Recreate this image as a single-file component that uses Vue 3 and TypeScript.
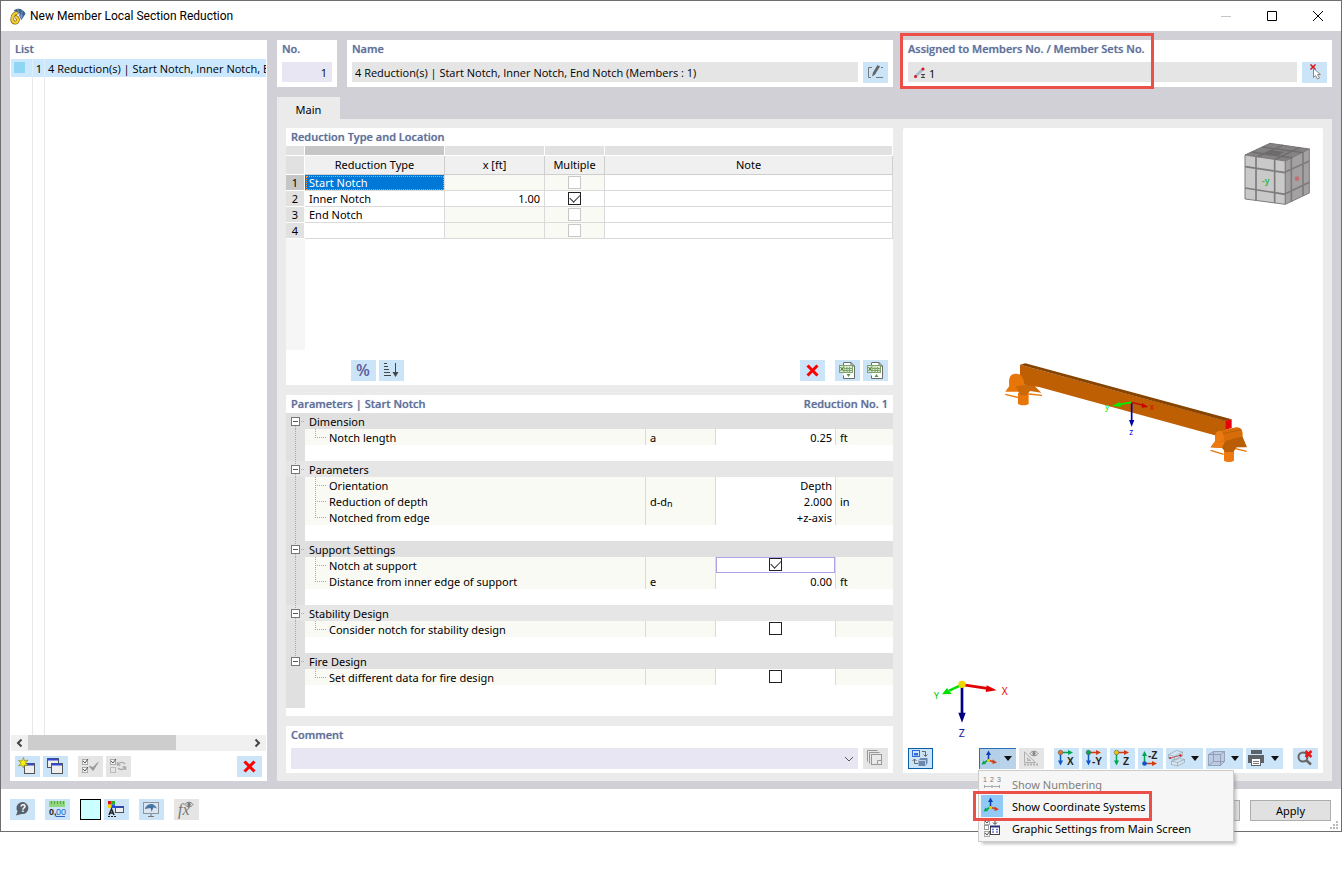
<script setup lang="ts">
import { reactive, ref } from 'vue'

interface Reduction {
  type: string
  x: string
  multiple: boolean
  locked: boolean
}

interface Param {
  label: string
  symbol?: string
  sub?: string
  value?: string
  unit?: string
  check?: boolean
  active?: boolean
}

interface Group {
  title: string
  rows: Param[]
}

interface Tool {
  icon: string
  label: string
  state?: string
  menu?: boolean
  gap?: boolean
}

const entryName = '4 Reduction(s) | Start Notch, Inner Notch, End Notch (Members : 1)'
const memberNo = ref('1')
const assigned = ref('1')
const name = ref(entryName)

const reductions = reactive<Reduction[]>([
  { type: 'Start Notch', x: '', multiple: false, locked: true },
  { type: 'Inner Notch', x: '1.00', multiple: true, locked: false },
  { type: 'End Notch', x: '', multiple: false, locked: true },
  { type: '', x: '', multiple: false, locked: true },
])

const groups = reactive<Group[]>([
  { title: 'Dimension', rows: [{ label: 'Notch length', symbol: 'a', value: '0.25', unit: 'ft' }] },
  {
    title: 'Parameters',
    rows: [
      { label: 'Orientation', value: 'Depth' },
      { label: 'Reduction of depth', symbol: 'd-d', sub: 'n', value: '2.000', unit: 'in' },
      { label: 'Notched from edge', value: '+z-axis' },
    ],
  },
  {
    title: 'Support Settings',
    rows: [
      { label: 'Notch at support', check: true, active: true },
      { label: 'Distance from inner edge of support', symbol: 'e', value: '0.00', unit: 'ft' },
    ],
  },
  { title: 'Stability Design', rows: [{ label: 'Consider notch for stability design', check: false }] },
  { title: 'Fire Design', rows: [{ label: 'Set different data for fire design', check: false }] },
])

const viewTools: Tool[] = [
  { icon: 'ruler', label: 'Dimensions', state: 'off' },
  { icon: 'viewX', label: 'View in X', gap: true },
  { icon: 'viewY', label: 'View in -Y' },
  { icon: 'viewZ', label: 'View in Z' },
  { icon: 'viewNegZ', label: 'View in -Z' },
  { icon: 'section', label: 'Section display', menu: true },
  { icon: 'cube', label: 'Box display', menu: true },
  { icon: 'printer', label: 'Print', menu: true },
  { icon: 'resetZoom', label: 'Reset view', gap: true },
]

const menuItems = [
  { icon: 'numbering', label: 'Show Numbering', state: 'disabled' },
  { icon: 'axes', label: 'Show Coordinate Systems', state: 'checked' },
  { icon: 'settings', label: 'Graphic Settings from Main Screen', state: '' },
]

const xMark = '<path d="M7.500 5.500l10 10M17.500 5.500l-10 10" stroke="#f00" stroke-width="3"/>'
const excel =
  '<path d="M9 2.500h7l3.500 3.500v12.500h-11v-3M8.500 6V2.500M16 2.500V6h3.500" fill="#fff" stroke="#6a6a6a"/><rect x="4.500" y="5.500" width="13" height="7" fill="#dcebd0" stroke="#7fa469"/><path d="M9 6v6M12 7v5M14.500 7v5M9 8.500h8M9 10.500h8" stroke="#7fa469"/><path d="M5.500 7l3 4M8.500 7l-3 4" stroke="#4e7d38"/>'
const darkTick = (x: number, y: number) =>
  `<rect x="${x}.5" y="${y}.5" width="5" height="5" fill="#f4f4f4" stroke="#aaa"/><path d="M${x + 1} ${y + 2}l2 2 3-4" fill="none" stroke="#555"/>`
const arrow = (c: string, d: string, head: string) =>
  `<path d="${d}" stroke="${c}" stroke-width="1.500"/><path d="${head}" fill="${c}"/>`
const text = (x: number, y: number, size: number, fill: string, t: string, extra = '') =>
  `<text x="${x}" y="${y}" font-size="${size}" fill="${fill}" font-family="Liberation Sans, sans-serif" ${extra}>${t}</text>`

const axes =
  arrow('#0b3fb0', 'M9.500 12V6', 'M7 7h5L9.500 2.500z') +
  arrow('#00a550', 'M9.500 12L5.500 14.500', 'M2.500 16.500l2-4 2.500 3.500z') +
  arrow('#d43c10', 'M9.500 12.500L14 13.500', 'M18 14.500l-4.500-3v4.500z') +
  '<circle cx="9.500" cy="12.500" r="1.500" fill="#f2d400"/>'

const viewDown = (h: string, v: string, dot: string, label: string) =>
  arrow(h, 'M6 4.500h9', 'M14 2l5 2.500-5 2.500z') +
  arrow(v, 'M6.500 5v8', 'M4 12.500h5l-2.500 5z') +
  `<circle cx="6.500" cy="4.500" r="2.300" fill="${dot}" stroke="#555" stroke-width=".5"/>` +
  text(label.length > 1 ? 10 : 13, 17, 10, '#222', label, 'font-weight="bold"')

const icons: Record<string, string> = {
  add:
    '<rect x="9.500" y="7.500" width="10" height="10" fill="#eee" stroke="#555"/><path d="M10 8.500h9" stroke="#3148d8" stroke-width="2"/><path d="M8.500 1.500l1 3.500 3.500-1-2.500 3 2.500 2.500-3.500-.500-1 3-1.500-3-3.500 1 2.500-3-2.500-2.500 3.500.500z" fill="#f8f000" stroke="#908a20" stroke-width=".7"/>',
  copy:
    '<rect x="4.500" y="2.500" width="11" height="9" fill="#eee" stroke="#555"/><path d="M5 3.500h10" stroke="#3148d8" stroke-width="2"/><rect x="8.500" y="7.500" width="11" height="10" fill="#eee" stroke="#555"/><path d="M9 8.500h10" stroke="#3148d8" stroke-width="2"/>',
  checkAll: darkTick(4, 3) + darkTick(4, 11) + '<path d="M11.500 10.500l3.500 4 5-8-5 5z" fill="#999" stroke="#999"/>',
  checkSwap:
    darkTick(4, 3) +
    '<rect x="4.500" y="11.500" width="5" height="5" fill="none" stroke="#bbb"/><path d="M19 8c-2-2-5-2-7 0M11.500 6v3h3M12 12c2 2 5 2 7 0M19.500 14v-3h-3" fill="none" stroke="#aaa" stroke-width="1.500"/>',
  remove: xMark,
  percent: '<text x="5" y="16" font-size="16" font-weight="600" fill="#5c5c9c" font-family="Open Sans, sans-serif">%</text>',
  sort:
    '<path d="M5 3.500h3M5 6.500h4M5 9.500h5M5 12.500h6M5 15.500h7M16.500 3v11" stroke="#444"/><path d="M13.500 12h6l-3 5z" fill="#444"/>',
  excelIn: excel + '<path d="M11.500 14h4l-2 3z" fill="#5f9448"/>',
  excelOut: excel + '<path d="M11.500 17h4l-2-3z" fill="#5f9448"/>',
  layers:
    '<path d="M4.500 13.500v-11h10M6.500 15.500v-11h10" fill="none" stroke="#999"/><rect x="8.500" y="6.500" width="10" height="10" fill="#eaeaea" stroke="#999"/><path d="M14.500 16v-3.500h4" fill="none" stroke="#999"/>',
  edit:
    '<path d="M9 5.500H5.500v10H8M13 15.500h7M18 5.500h2" fill="none" stroke="#777"/><path d="M9 14.500l1-4L14.500 3l2.500 1.500L12 12.500z" fill="#666"/>',
  pick:
    '<path d="M8.500 2.500l5 5M13.500 2.500l-5 5" stroke="#e01010" stroke-width="1.500"/><path d="M11.500 6.500v9l2-2 2 3.500 2-1-2-3.500h3z" fill="#fff" stroke="#888"/>',
  help:
    '<path d="M6 16.500l1.500-4a6 6 0 1 1 4 2.500z" fill="#5a6068"/>' + text(10, 13, 10, '#fff', '?', 'font-weight="bold"'),
  units:
    '<rect x="4" y="2" width="16" height="6" fill="#8fd67c"/><path d="M6.500 2v3M9.500 2v3M12.500 2v3M15.500 2v3M18.500 2v3" stroke="#5aa24a"/>' +
    text(4, 16, 9, '#222', '0,', 'font-weight="bold"') +
    text(11, 16, 9, '#2b62c8', '00') +
    '<path d="M11 17.500h9" stroke="#2b62c8"/>',
  display:
    '<path d="M4 2h3.500v3.500H4z" fill="#e01010"/><path d="M7.500 2H11v3.500H7.500z" fill="#28b020"/><path d="M4 5.500h3.500V9H4z" fill="#f2d400"/><path d="M7.500 5.500H11V9H7.500z" fill="#2050e0"/><path d="M5 16l2.500-6 2.500 6M6 14h3" fill="none" stroke="#222" stroke-width="1.500"/><path d="M4 17.500h9" stroke="#222" stroke-dasharray="2 1"/><rect x="11.500" y="7.500" width="8" height="6" fill="#f0f0f0" stroke="#555"/><path d="M11 8h9" stroke="#3148a8" stroke-width="2"/>',
  monitor:
    '<rect x="4.500" y="3.500" width="15" height="11" fill="#dce6f0" stroke="#8a949c"/><path d="M9 17.500h6M12 15v2" stroke="#777"/><path d="M6 9.500C8 4 15 3 18 9.500l-3.500-1-2 4.500-1-4.500z" fill="#4f7fae"/><path d="M6 9.500l6-1M9 6l4 4M13 5v5" stroke="#2f5a86" stroke-width=".7"/>',
  formula:
    '<text x="4" y="16" font-size="16" font-style="italic" fill="#777" font-family="Liberation Serif, serif">fx</text><path d="M11 5.500c2-3 6-3 8 0-2 3-6 3-8 0z" fill="#e5e5e5" stroke="#777"/><circle cx="15" cy="5.500" r="1.700" fill="#777"/>',
  swapView:
    '<rect x="4.500" y="2.500" width="7" height="6" fill="none" stroke="#2f6ae0"/><path d="M6 5h4v2.500H6z" fill="#2f6ae0"/><path d="M14 3.500h3.500V8M15.500 6.500l2 2 2-2M10 15.500H6.500V11M4.500 13l2-2 2 2" fill="none" stroke="#666"/><path d="M10.500 12.500l2-2.500h7v5l-2 3h-7z" fill="#6b87ad"/><path d="M11 12.500h6.500v5" fill="none" stroke="#c0d0e4"/>',
  axes,
  ruler:
    '<path d="M5.500 4v10.500h11z" fill="none" stroke="#b0b0b0"/><path d="M8.500 10v2.500h3z" fill="none" stroke="#b0b0b0"/><path d="M5 16.500h14" stroke="#b0b0b0" stroke-width="2" stroke-dasharray="2 1"/><path d="M11 5.500c2-3 6-3 8 0-2 3-6 3-8 0z" fill="#eee" stroke="#888"/><circle cx="15" cy="5.500" r="1.700" fill="#888"/>',
  viewX: viewDown('#00a550', '#0d56c8', '#e8702a', 'X'),
  viewY: viewDown('#d43c10', '#0d56c8', '#00a550', '-Y'),
  viewZ: viewDown('#d43c10', '#00a550', '#f2c400', 'Z'),
  viewNegZ:
    arrow('#00a550', 'M6.500 15V7', 'M4 8h5L6.500 3z') +
    arrow('#d43c10', 'M7 15.500h7', 'M14 13l5 2.500-5 2.500z') +
    '<circle cx="6.500" cy="15.500" r="2.300" fill="#0d56c8"/>' +
    text(10, 11, 10, '#222', '-Z', 'font-weight="bold"'),
  section:
    '<path d="M2.500 6.500l8-4 6 1.500v4l-8 3.500-6-1.500zM2.500 6.500l6 2 8-4.500M8.500 8.500v3M5.500 13l8-2.500 5 1v3l-7 3.500-6-1.500zM5.500 13l6 1.500 7-3M11.500 14.500V18" fill="#d5e4f0" stroke="#8f9aa3" stroke-width=".6"/><path d="M4 10l10-2.500" stroke="#b04048" stroke-width=".8"/><circle cx="14.500" cy="7.500" r="1.200" fill="#d02020"/><circle cx="4" cy="10" r="1" fill="#d02020"/>',
  cube:
    '<path d="M2.500 6.500l5-3h11v10l-4 4h-12z" fill="#bccbe4" stroke="#858ba0" stroke-width=".7"/><path d="M2.500 6.500h12v11M14.500 6.500l4-3M7.500 3.500v10h11M7.500 13.500l-5 4" fill="none" stroke="#858ba0" stroke-width=".7"/>',
  printer:
    '<path d="M5 2h11v4H5zM2 7h16v8H2z" fill="#5c6268"/><rect x="5.500" y="10.500" width="9" height="7" fill="#fff" stroke="#5c6268"/><path d="M7 13.500h6M7 15.500h6" stroke="#777"/>',
  resetZoom:
    '<circle cx="10" cy="9" r="4.500" fill="none" stroke="#666" stroke-width="2"/><path d="M13 12l5 4.500" stroke="#666" stroke-width="2.500"/><path d="M12.500 3l6 6M18.500 3l-6 6" stroke="#e81818" stroke-width="2.500"/>',
  numbering:
    '<path d="M3 13.500h16M3.500 12v3M11 12v3M18.500 12v3" stroke="#aaa"/>' +
    text(2, 9, 7, '#777', '1') + text(9, 9, 7, '#777', '2') + text(16, 9, 7, '#777', '3'),
  settings:
    darkTick(3, 2) +
    '<rect x="3.500" y="8.500" width="4" height="4" fill="#fff" stroke="#999"/>' +
    darkTick(3, 14) +
    '<path d="M11 3.500h3V7M12 5.500l2 2 2-2" fill="none" stroke="#444"/><rect x="9.500" y="9.500" width="9" height="8" fill="#fff" stroke="#444"/><path d="M9 9.500h10" stroke="#24307c" stroke-width="2"/><path d="M11 12.500h2M11 15h2M15 12.500h2M15 15h2" stroke="#6a7ad0" stroke-width="1.500"/>',
}
</script>

<template>
  <div class="desktop">
    <main class="window">
      <header class="titlebar">
        <svg class="app-icon" viewBox="0 0 18 18" aria-hidden="true">
          <path d="M5 3C9-1 15 1 17.500 6L13 13l-3-7z" fill="#3d618c" />
          <path d="M6 3l9 6M9 1l4 11M14 2l-1 9" stroke="#8fb0d4" stroke-width=".7" />
          <path d="M9 5.500C5 5 3.500 9 3.500 12a3 3 0 1 0 3-2.500" fill="none" stroke="#7a6012" stroke-width="4" />
          <path d="M9 5.500C5 5 3.500 9 3.500 12a3 3 0 1 0 3-2.500" fill="none" stroke="#f6cf30" stroke-width="2.500" />
        </svg>
        <h1>New Member Local Section Reduction</h1>
        <div class="window-controls">
          <button type="button" aria-label="Minimize"><svg viewBox="0 0 12 12"><path d="M1 6.500h10" stroke="#c4c4c4" /></svg></button>
          <button type="button" aria-label="Maximize"><svg viewBox="0 0 12 12"><path d="M1.500 1.500h9v9h-9z" fill="none" stroke="#000" /></svg></button>
          <button type="button" aria-label="Close"><svg viewBox="0 0 12 12"><path d="M1 1l10 10M11 1L1 11" stroke="#000" /></svg></button>
        </div>
      </header>

      <div class="body">
        <section class="card list">
          <h2>List</h2>
          <ul class="entries">
            <li class="entry">
              <span class="swatch-cell"><i></i></span>
              <span class="no-cell">1</span>
              <span class="name-cell">{{ entryName }}</span>
            </li>
          </ul>
          <div class="scrollbar">
            <button type="button" aria-label="Scroll left"><svg viewBox="0 0 17 16"><path d="M10.500 4.500L7 8l3.500 3.500" fill="none" stroke="#444" stroke-width="2" /></svg></button>
            <div class="track"><div class="thumb"></div></div>
            <button type="button" aria-label="Scroll right"><svg viewBox="0 0 17 16"><path d="M6.500 4.500L10 8l-3.500 3.500" fill="none" stroke="#444" stroke-width="2" /></svg></button>
          </div>
          <div class="bar list-bar">
            <button type="button" class="tool" aria-label="New"><svg viewBox="0 0 25 21" v-html="icons.add"></svg></button>
            <button type="button" class="tool" aria-label="Copy"><svg viewBox="0 0 25 21" v-html="icons.copy"></svg></button>
            <button type="button" class="tool off gap" aria-label="Select all"><svg viewBox="0 0 25 21" v-html="icons.checkAll"></svg></button>
            <button type="button" class="tool off" aria-label="Invert selection"><svg viewBox="0 0 25 21" v-html="icons.checkSwap"></svg></button>
            <button type="button" class="tool push" aria-label="Delete"><svg viewBox="0 0 25 21" v-html="icons.remove"></svg></button>
          </div>
        </section>

        <div class="editor">
          <div class="identity">
            <section class="card">
              <h2><label for="no">No.</label></h2>
              <div class="field-row"><input id="no" v-model="memberNo" class="field lilac right" /></div>
            </section>
            <section class="card">
              <h2><label for="name">Name</label></h2>
              <div class="field-row">
                <input id="name" v-model="name" class="field" readonly />
                <button type="button" class="tool" aria-label="Edit name"><svg viewBox="0 0 25 21" v-html="icons.edit"></svg></button>
              </div>
            </section>
            <section class="card marked">
              <h2><label for="assigned">Assigned to Members No. / Member Sets No.</label></h2>
              <div class="field-row">
                <div class="field icon-field">
                  <svg class="member-icon" viewBox="0 0 14 14" aria-hidden="true">
                    <path d="M2.500 10.500l8-8" stroke="#a9bad2" stroke-width="3" />
                    <circle cx="2.500" cy="10.500" r="1.500" fill="#d81818" />
                    <circle cx="10" cy="3" r="1.500" fill="#d81818" />
                    <path d="M8 8.500h4M8 11.500h4M10 8.500v3" stroke="#444" />
                  </svg>
                  <input id="assigned" v-model="assigned" />
                </div>
                <button type="button" class="tool" aria-label="Pick members"><svg viewBox="0 0 25 21" v-html="icons.pick"></svg></button>
              </div>
              <div class="mark mark-assigned"></div>
            </section>
          </div>

          <nav class="tabs"><button type="button" class="tab">Main</button></nav>

          <div class="page">
            <div class="column">
              <section class="card reductions">
                <h2 class="tight">Reduction Type and Location</h2>
                <table class="grid">
                  <colgroup>
                    <col class="c-no" /><col class="c-type" /><col class="c-x" /><col class="c-multi" /><col />
                  </colgroup>
                  <thead>
                    <tr class="strip"><td></td><td class="current"></td><td></td><td></td><td></td></tr>
                    <tr class="heads">
                      <th></th><th>Reduction Type</th><th>x [ft]</th><th>Multiple</th><th>Note</th>
                    </tr>
                  </thead>
                  <tbody>
                    <tr v-for="(r, i) in reductions" :key="i">
                      <th scope="row" :class="{ current: i === 0 }">{{ i + 1 }}</th>
                      <td :class="{ selected: i === 0 }">{{ r.type }}</td>
                      <td class="num" :class="{ locked: r.locked }">{{ r.x }}</td>
                      <td class="multi" :class="{ locked: r.locked }">
                        <input v-model="r.multiple" type="checkbox" class="check" :disabled="r.locked" :aria-label="`Multiple, row ${i + 1}`" />
                      </td>
                      <td></td>
                    </tr>
                  </tbody>
                </table>
                <div class="grid-rest"></div>
                <div class="bar grid-bar">
                  <button type="button" class="tool" aria-label="Relative"><svg viewBox="0 0 25 21" v-html="icons.percent"></svg></button>
                  <button type="button" class="tool" aria-label="Sort"><svg viewBox="0 0 25 21" v-html="icons.sort"></svg></button>
                  <button type="button" class="tool push" aria-label="Delete row"><svg viewBox="0 0 25 21" v-html="icons.remove"></svg></button>
                  <button type="button" class="tool gap" aria-label="Import table"><svg viewBox="0 0 25 21" v-html="icons.excelIn"></svg></button>
                  <button type="button" class="tool" aria-label="Export table"><svg viewBox="0 0 25 21" v-html="icons.excelOut"></svg></button>
                </div>
              </section>

              <section class="card params">
                <h2 class="tight split"><span>Parameters | Start Notch</span><span>Reduction No. 1</span></h2>
                <table class="tree">
                  <colgroup>
                    <col class="t-gutter" /><col /><col class="t-symbol" /><col class="t-value" /><col class="t-unit" />
                  </colgroup>
                  <tbody v-for="(g, gi) in groups" :key="g.title">
                    <tr class="group" :class="{ light: gi % 2 }">
                      <td class="side">
                        <svg class="gutter" viewBox="0 0 19 16" aria-hidden="true">
                          <path v-if="gi" class="dots" d="M9.500 0V4" />
                          <path v-if="gi < groups.length - 1" class="dots" d="M9.500 13V16" />
                          <path class="dots" d="M15 8.500h4" />
                          <rect x="5.500" y="4.500" width="8" height="8" fill="#fff" stroke="#777" />
                          <path d="M7 8.500h5" stroke="#555" />
                        </svg>
                      </td>
                      <th colspan="4" scope="rowgroup"><span class="label">{{ g.title }}</span></th>
                    </tr>
                    <tr v-for="(p, pi) in g.rows" :key="p.label" class="param">
                      <td class="side">
                        <svg class="gutter" viewBox="0 0 19 16" aria-hidden="true"><path v-if="gi < groups.length - 1" class="dots" d="M9.500 0V16" /></svg>
                      </td>
                      <th scope="row">
                        <svg class="branch" viewBox="0 0 24 16" aria-hidden="true">
                          <path class="dots" :d="pi < g.rows.length - 1 ? 'M10.500 0V16M10 8.500H21' : 'M10.500 0V8.500M10 8.500H21'" />
                        </svg><span class="label">{{ p.label }}</span>
                      </th>
                      <td><span class="label">{{ p.symbol }}<sub v-if="p.sub">{{ p.sub }}</sub></span></td>
                      <td class="value" :class="{ active: p.active }">
                        <input v-if="p.value !== undefined" v-model="p.value" :aria-label="p.label" />
                        <input v-else v-model="p.check" type="checkbox" class="check" :aria-label="p.label" />
                      </td>
                      <td class="unit"><span class="label">{{ p.unit }}</span></td>
                    </tr>
                    <tr class="space" :class="{ last: gi === groups.length - 1 }">
                      <td class="side">
                        <svg class="gutter" viewBox="0 0 19 16" aria-hidden="true"><path v-if="gi < groups.length - 1" class="dots" d="M9.500 0V16" /></svg>
                      </td>
                      <td colspan="4"></td>
                    </tr>
                  </tbody>
                </table>
              </section>

              <section class="card">
                <h2><label for="comment">Comment</label></h2>
                <div class="field-row">
                  <div class="combo">
                    <select id="comment"><option></option></select>
                    <svg viewBox="0 0 10 6" aria-hidden="true"><path d="M1 1l4 4 4-4" fill="none" stroke="#555" /></svg>
                  </div>
                  <button type="button" class="tool off" aria-label="Comment templates"><svg viewBox="0 0 25 21" v-html="icons.layers"></svg></button>
                </div>
              </section>
            </div>

            <section class="viewport">
              <svg class="scene" viewBox="0 0 420 616" role="img" aria-label="Member model">
                <g transform="translate(327 2) scale(.333333)">
                  <path d="M45 75L120 40l118 17-72 36z" fill="#848282" stroke="#767474" stroke-width="3" />
                  <path d="M45 75l121 18v130L45 207z" fill="#c9c9c9" stroke="#7e7b7b" stroke-width="3" />
                  <path d="M166 93l72-36v132l-72 34z" fill="#a3a1a1" stroke="#7e7b7b" stroke-width="3" />
                  <path d="M78 79v133M134 87v132M45 110l121 18M45 174l121 19M184 84v131M219 66v131M166 126l72-33M166 191l72-34" stroke="#7e7b7b" stroke-width="5" />
                  <path d="M66 66l121 18M97 51l121 17M83 80l76-35M136 88l73-36" stroke="#6e6c6c" stroke-width="4" />
                  <path d="M104 72l22-11 37 5-22 12z" fill="#6d6b6b" />
                  <circle cx="201" cy="146" r="7" fill="#c07070" />
                  <text x="96" y="161" font-size="25" font-weight="bold" fill="#3fb84a">-y</text>
                </g>
                <g transform="translate(87 212) scale(.333333)">
                  <path d="M46 163l40 10M116 162l40 4" stroke="#e87508" stroke-width="4" />
                  <path d="M62 132L46 155h44l20-20z" fill="#e87508" />
                  <path d="M84 158h32v34c-8 5-24 5-32 0z" fill="#e87508" />
                  <path d="M78 138l50-6 26 26-34-5-10 13H92l-8-14z" fill="#cc6906" />
                  <path d="M90 74l618 168v43l-28 2L150 142l-60-10z" fill="#bd5f02" />
                  <path d="M90 74l16-4 619 168-17 5z" fill="#864400" />
                  <path d="M707 242l18-4v26l-18 5z" fill="#e8000c" />
                  <path d="M58 138c-3-24 2-36 18-37 14-1 25 6 27 33l-20 4z" fill="#e87508" />
                  <path d="M662 331l39 12M736 326l34 8" stroke="#e87508" stroke-width="4" />
                  <path d="M702 325h30v37c-8 5-22 5-30 0z" fill="#ec7a10" />
                  <path d="M678 300L662 322l34 2 10 12h24l10-14 31 0-14-34z" fill="#b95e04" />
                  <path d="M678 300L662 322l34 2 10-22z" fill="#ec7a10" />
                  <path d="M676 303c-3-20 3-29 15-31l48-10c16-1 20 12 19 26l-58 17z" fill="#d86c08" />
                  <path d="M676 304c-4-20 3-32 13-31 16 2 14 30 10 31z" fill="#ec7a10" />
                  <path d="M698 281l56-12" stroke="#b96008" stroke-width="3" />
                  <path d="M425 187v58" stroke="#0000a8" stroke-width="5" /><path d="M417 240h16l-8 20z" fill="#0000a8" />
                  <path d="M425 187l-42 7" stroke="#00f000" stroke-width="5" /><path d="M366 198l23-12 4 14z" fill="#00f000" />
                  <path d="M425 187l36 9" stroke="#c80000" stroke-width="4" /><path d="M475 201l-18-12-2 14z" fill="#c80000" />
                  <text x="345" y="211" font-size="25" fill="#00e800">y</text>
                  <text x="479" y="210" font-size="25" fill="#e80000">x</text>
                  <text x="418" y="286" font-size="25" fill="#0000e8">z</text>
                </g>
                <g transform="translate(17 532) scale(.333333)">
                  <path d="M126 74v90" stroke="#000080" stroke-width="8" /><path d="M115 158h22l-11 30z" fill="#000080" />
                  <path d="M126 74L88 92" stroke="#00e000" stroke-width="8" /><path d="M66 103l15-19 14 18z" fill="#00e000" />
                  <path d="M126 74l80 12" stroke="#e00000" stroke-width="8" /><path d="M230 91l-30-15-3 20z" fill="#e00000" />
                  <circle cx="126" cy="73" r="11" fill="#ecd800" />
                  <text x="41" y="117" font-size="29" fill="#00c800">Y</text>
                  <text x="245" y="105" font-size="30" fill="#e80000">X</text>
                  <text x="116" y="230" font-size="32" fill="#2020a0">Z</text>
                </g>
              </svg>
              <div class="bar view-bar">
                <button type="button" class="tool on" aria-label="Switch view"><svg viewBox="0 0 25 21" v-html="icons.swapView"></svg></button>
                <div class="menu-anchor push">
                  <button type="button" class="tool wide pressed" aria-label="Display options" aria-expanded="true">
                    <svg viewBox="0 0 25 21" v-html="icons.axes"></svg><i class="caret"></i>
                  </button>
                  <div class="menu" role="menu">
                    <button v-for="m in menuItems" :key="m.label" type="button" role="menuitem" :class="m.state">
                      <svg viewBox="0 0 22 22" v-html="icons[m.icon]"></svg><span>{{ m.label }}</span>
                    </button>
                    <div class="mark mark-menu"></div>
                  </div>
                </div>
                <button v-for="t in viewTools" :key="t.icon" type="button" class="tool" :class="[t.state, { wide: t.menu, gap: t.gap }]" :aria-label="t.label">
                  <svg viewBox="0 0 25 21" v-html="icons[t.icon]"></svg><i v-if="t.menu" class="caret"></i>
                </button>
              </div>
            </section>
          </div>
        </div>
      </div>

      <footer class="footer">
        <button type="button" class="tool" aria-label="Help"><svg viewBox="0 0 25 21" v-html="icons.help"></svg></button>
        <button type="button" class="tool gap" aria-label="Units"><svg viewBox="0 0 25 21" v-html="icons.units"></svg></button>
        <button type="button" class="colour gap" aria-label="Colour"></button>
        <button type="button" class="tool" aria-label="Display properties"><svg viewBox="0 0 25 21" v-html="icons.display"></svg></button>
        <button type="button" class="tool gap" aria-label="Screen"><svg viewBox="0 0 25 21" v-html="icons.monitor"></svg></button>
        <button type="button" class="tool off gap" aria-label="Formula"><svg viewBox="0 0 25 21" v-html="icons.formula"></svg></button>
        <button type="button" class="action push" aria-label="Cancel"></button>
        <button type="button" class="action">Apply</button>
        <svg class="grip" viewBox="0 0 8 8" aria-hidden="true"><path d="M6 0h2v2H6zM3 3h2v2H3zM6 3h2v2H6zM0 6h2v2H0zM3 6h2v2H3zM6 6h2v2H6z" fill="#bbb" /></svg>
      </footer>
    </main>
  </div>
</template>

<style>
body {
  background: #fff;
}
</style>

<style scoped>
* {
  box-sizing: border-box;
}
button,
input,
select {
  font: inherit;
  color: inherit;
  margin: 0;
  padding: 0;
  border: 0;
  background: none;
  border-radius: 0;
  min-width: 0;
}
svg {
  display: block;
}
.desktop {
  min-height: 100vh;
}
.window {
  border: 1px solid #6f6d70;
  font: 11px/16px "Noto Sans", "Open Sans", sans-serif;
  color: #000;
}
.titlebar {
  display: flex;
  align-items: center;
  height: 30px;
  padding-left: 8px;
}
.titlebar h1 {
  margin: 0 auto 0 4px;
  font: 400 12px/16px Roboto, "Open Sans", sans-serif;
}
.app-icon {
  width: 17px;
  height: 17px;
}
.window-controls {
  display: flex;
}
.window-controls button {
  width: 46px;
  height: 28px;
  display: grid;
  place-items: center;
}
.window-controls svg {
  width: 12px;
  height: 12px;
}
.body {
  display: grid;
  grid-template-columns: 257px 1fr;
  gap: 10px;
  padding: 9px 9px 8px;
  background: #d1d0d6;
}
.card {
  background: #fff;
  min-width: 0;
}
.card h2 {
  margin: 0;
  padding: 1px 5px 0;
  height: 19px;
  font: 600 11px/16px "Open Sans", sans-serif;
  color: #5f6f99;
  text-shadow: 0 0 1px #5f6f9999;
}
.card h2.tight {
  height: 18px;
}
.split {
  display: flex;
  justify-content: space-between;
}
.list {
  display: flex;
  flex-direction: column;
  padding: 0 1px;
}
.card.list h2 {
  padding-left: 4px;
}
.entries {
  flex: 1;
  margin: 0;
  padding: 0;
  list-style: none;
  background: linear-gradient(#e8e8e8, #e8e8e8) 21px 0 / 1px 100% no-repeat,
    linear-gradient(#e8e8e8, #e8e8e8) 33px 0 / 1px 100% no-repeat;
}
.entry {
  display: grid;
  grid-template-columns: 22px 12px 1fr;
  height: 18px;
  line-height: 20px;
  background: #cce8ff;
}
.entry span {
  border-right: 1px solid #dfeefb;
}
.entry .name-cell {
  padding-left: 3px;
  border: 0;
  overflow: hidden;
  white-space: nowrap;
  font-family: "Open Sans", sans-serif;
}
.swatch-cell {
  padding: 3px;
}
.swatch-cell i {
  display: block;
  width: 11px;
  height: 11px;
  background: #8fd6f4;
}
.no-cell {
  text-align: right;
  padding-right: 2px;
}
.scrollbar {
  display: flex;
  height: 16px;
  background: #f0f0f0;
}
.scrollbar button {
  width: 17px;
}
.track {
  flex: 1;
}
.thumb {
  width: 67%;
  height: 15px;
  background: #cdcdcd;
}
.bar {
  display: flex;
  gap: 3px;
}
.list-bar {
  padding: 5px 4px 4px;
}
.tool {
  flex: none;
  display: flex;
  align-items: center;
  width: 25px;
  height: 21px;
  background: #cce4f7;
}
.tool svg {
  width: 25px;
  height: 21px;
  flex: none;
}
.tool.off {
  background: #e5e5e5;
}
.tool.wide {
  width: 37px;
}
.tool.on {
  box-shadow: inset 0 0 0 1px #0a5ea8;
}
.tool.pressed {
  background: linear-gradient(90deg, #b4cfe8 21px, #b9d3eb 21px);
  box-shadow: inset 1px 1px #2a70b4;
}
.caret {
  border: 4px solid transparent;
  border-top: 5px solid #111;
  border-bottom: 0;
}
.gap {
  margin-left: 7px;
}
.push {
  margin-left: auto;
}
.editor {
  min-width: 0;
  display: flex;
  flex-direction: column;
}
.identity {
  display: grid;
  grid-template-columns: 60px 1fr 429px;
  gap: 10px;
}
.field-row {
  display: flex;
  gap: 5px;
  padding: 3px 5px 4px;
}
.field {
  flex: 1;
  height: 20px;
  padding: 0 3px;
  background: #e5e5e5;
  font-family: "Open Sans", sans-serif;
}
.lilac {
  background: #e7e6f2;
}
.right {
  padding-right: 5px;
  text-align: right;
}
.icon-field {
  display: flex;
  gap: 2px;
  padding: 2px 3px 0 5px;
}
.icon-field input {
  flex: 1;
  height: 18px;
}
.member-icon {
  width: 14px;
  height: 14px;
  margin-top: 2px;
}
.marked {
  position: relative;
}
.mark {
  position: absolute;
  border: 3px solid #ec4f48;
  pointer-events: none;
}
.mark-assigned {
  top: -7px;
  left: -3px;
  width: 254px;
  height: 56px;
}
.tabs {
  display: flex;
  padding-top: 10px;
}
.tab {
  width: 63px;
  height: 22px;
  padding-top: 3px;
  background: #ebebeb;
}
.page {
  display: grid;
  grid-template-columns: 1fr 420px;
  gap: 10px;
  padding: 9px 9px 8px;
  background: #ebebeb;
}
.column {
  display: flex;
  flex-direction: column;
  gap: 10px;
  min-width: 0;
}
table {
  width: 100%;
  border-spacing: 0;
  table-layout: fixed;
}
th,
td {
  padding: 0;
  font-weight: 400;
  overflow: hidden;
  white-space: nowrap;
}
.c-no {
  width: 19px;
}
.c-type {
  width: 140px;
}
.c-x {
  width: 100px;
}
.c-multi {
  width: 60px;
}
.grid td,
.grid th {
  border-right: 1px solid #dadada;
  border-bottom: 1px solid #dadada;
}
.grid td {
  height: 16px;
  line-height: 15px;
  padding-left: 4px;
}
.grid .strip td {
  height: 10px;
  background: #e1e1e1;
  border-color: #fff;
}
.grid .strip .current {
  background: #c6c6c6;
}
.grid .heads th {
  height: 19px;
  line-height: 18px;
  background: #f0f0f0;
  border-color: #cfcfcf;
}
.grid .heads th:first-child,
.grid tbody th {
  background: #e1e1e1;
  border-color: #fff;
}
.grid tbody th {
  line-height: 15px;
}
.grid tbody th.current {
  background: #c6c6c6;
}
.grid .selected {
  background: #0078d7;
  color: #fff;
  outline: 1px dotted #ff9a3c;
  outline-offset: -2px;
}
.grid .locked,
.param th,
.param td {
  background: #f9faf4;
}
.grid .num {
  text-align: right;
  padding-right: 4px;
}
.grid .multi {
  padding: 0;
}
.check {
  appearance: none;
  display: block;
  width: 13px;
  height: 13px;
  margin: 1px auto;
  border: 1px solid #222;
  background: #fff;
}
.check:disabled {
  border-color: #c8c8c8;
}
.check:checked::before {
  content: "";
  display: block;
  width: 9px;
  height: 5px;
  margin: 1px;
  border: solid #333;
  border-width: 0 0 1px 1px;
  transform: rotate(-45deg);
}
.grid-rest {
  width: 19px;
  height: 111px;
  background: #f6f6f6;
}
.grid-bar {
  padding: 10px 5px 4px 65px;
}
.t-gutter {
  width: 19px;
}
.t-symbol {
  width: 70px;
}
.t-value {
  width: 120px;
}
.t-unit {
  width: 57px;
}
.tree {
  margin-bottom: 8px;
}
.tree td,
.tree th {
  height: 16px;
  text-align: left;
  vertical-align: top;
}
.label {
  display: inline-block;
  vertical-align: top;
  height: 16px;
  padding-top: 2px;
  line-height: 14px;
}
.gutter {
  width: 19px;
  height: 16px;
}
.dots {
  fill: none;
  stroke: #aaa;
  stroke-dasharray: 1 1;
}
.group td,
.group th,
.tree .side {
  background: #e0e0e0;
}
.group.light td,
.group.light th {
  background: #e6e6e6;
}
.group th {
  padding-left: 4px;
}
.param th,
.param td {
  border-right: 1px solid #dadada;
}
.param td {
  padding-left: 4px;
}
.param .side {
  padding: 0;
  border: 0;
}
.param .unit {
  border: 0;
}
.branch {
  display: inline-block;
  vertical-align: top;
  width: 24px;
  height: 16px;
}
.param .value {
  background: #fff;
  padding: 0;
}
.value input:not(.check) {
  display: block;
  width: 100%;
  height: 16px;
  padding: 1px 3px 0 0;
  line-height: 14px;
  text-align: right;
}
.param .active {
  box-shadow: inset 0 0 0 1px #a9a5e6;
}
sub {
  font-size: 9px;
  line-height: 8px;
  vertical-align: -1px;
}
.tree .last td {
  height: 23px;
}
.combo {
  flex: 1;
  display: flex;
  align-items: center;
  height: 21px;
  padding-right: 4px;
  background: #e7e6f2;
}
.combo select {
  flex: 1;
  height: 21px;
  appearance: none;
}
.combo svg {
  width: 10px;
  height: 6px;
}
.viewport {
  display: flex;
  flex-direction: column;
  background: #fff;
  border-radius: 2px 2px 0 0;
}
.scene {
  flex: 1;
  width: 100%;
}
.view-bar {
  padding: 4px 5px;
}
.menu-anchor {
  position: relative;
}
.menu {
  position: absolute;
  z-index: 2;
  top: 22px;
  left: -1px;
  width: 256px;
  padding: 2px;
  border: 1px solid #ccc;
  background: #f6f6f6;
  box-shadow: 3px 3px 3px -1px #8888;
}
.menu button {
  display: flex;
  align-items: center;
  gap: 9px;
  width: 100%;
  height: 22px;
  white-space: nowrap;
}
.menu button svg {
  width: 22px;
  height: 22px;
}
.menu button span {
  padding-top: 2px;
}
.menu .checked svg {
  background: #91c9f7;
}
.menu .disabled {
  color: #808080;
}
.mark-menu {
  top: 20px;
  left: -6px;
  width: 179px;
  height: 30px;
}
.footer {
  display: flex;
  align-items: flex-start;
  gap: 3px;
  height: 42px;
  padding: 10px 3px 0 9px;
}
.colour {
  width: 21px;
  height: 21px;
  border: 1px solid #000;
  background: #ccffff;
}
.action {
  width: 81px;
  height: 21px;
  margin-top: 1px;
  border: 1px solid #adadad;
  background: #e1e1e1;
}
.action.push {
  margin-right: 7px;
}
.grip {
  width: 8px;
  height: 8px;
  margin: 22px 0 0 -4px;
}
</style>
